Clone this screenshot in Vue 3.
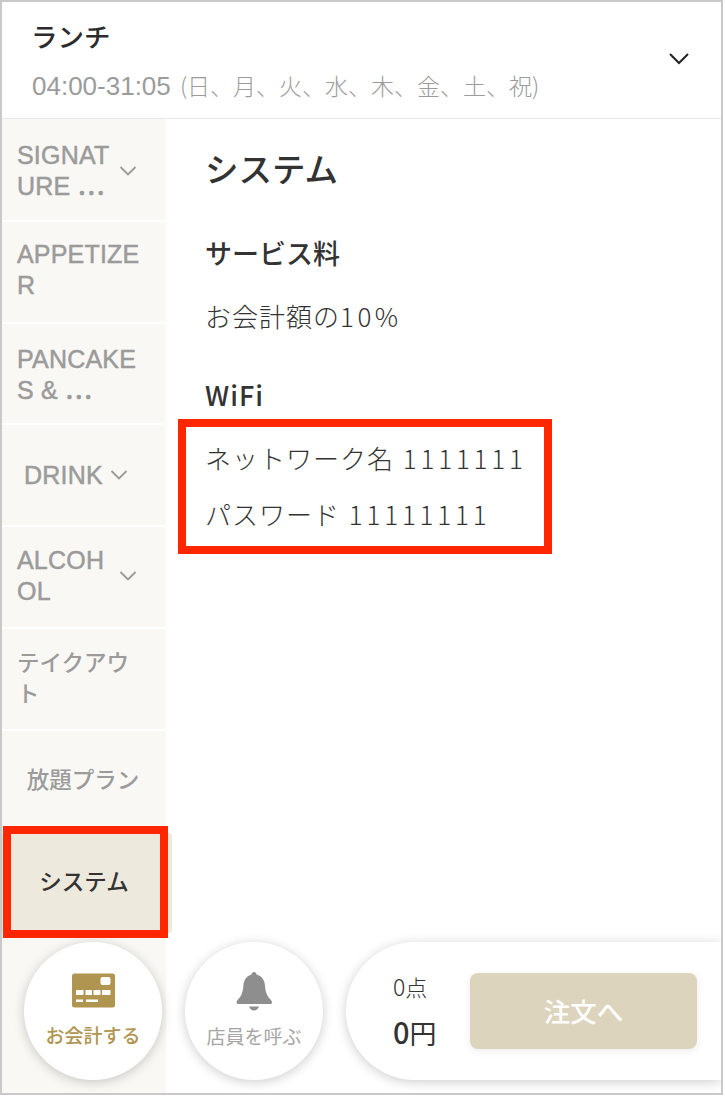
<script setup>
const cats = [
  { lines: ['SIGNAT', 'URE ⋯'], arrow: true, kind: 'low' },
  { lines: ['APPETIZE', 'R'], kind: 'high' },
  { lines: ['PANCAKE', 'S & ⋯'], kind: 'low' },
  { lines: ['DRINK'], arrow: true, kind: 'indent' },
  { lines: ['ALCOH', 'OL'], arrow: true, kind: 'high' },
  { lines: ['テイクアウ', 'ト'], kind: 'jp' },
  { lines: ['放題プラン'], kind: 'jp center' },
]
</script>

<template>
  <div class="page">
    <div class="frame">
      <header class="head">
        <div>
          <div class="plan">ランチ</div>
          <div class="hours"><span class="time">04:00-31:05</span> (日、月、火、水、木、金、土、祝)</div>
        </div>
        <svg class="head-arrow" width="22" height="14" viewBox="0 0 22 14"><path d="M2 2l9 9 9-9" fill="none" stroke="#222" stroke-width="2"/></svg>
      </header>
      <div class="body">
        <nav class="side">
          <div v-for="c in cats" :key="c.lines[0]" class="cat" :class="c.kind">
            <div class="cat-text"><div v-for="l in c.lines" :key="l">{{ l }}</div></div>
            <svg v-if="c.arrow" class="cat-arrow" width="18" height="12" viewBox="0 0 18 12"><path d="M1.500 2l7.500 7.500 7.500-7.500" fill="none" stroke="#9a9a96" stroke-width="1.800"/></svg>
          </div>
          <div class="cat jp active">システム</div>
        </nav>
        <main class="content">
          <h1>システム</h1>
          <h2 class="first">サービス料</h2>
          <p>お会計額の<span class="pct">10%</span></p>
          <h2 class="wifi">WiFi</h2>
          <p class="net">ネットワーク名 <span class="num">1111111</span></p>
          <p class="pass">パスワード <span class="num">11111111</span></p>
        </main>
      </div>

      <div class="dock">
        <button class="round pay">
          <svg width="43" height="35" viewBox="0 0 43 35">
            <rect width="43" height="34" y="0.500" rx="2.500" fill="#b09550"/>
            <rect x="28.500" y="4" width="10" height="8" rx="2" fill="#fff"/>
            <rect x="4" y="17" width="7.500" height="5" rx="0.500" fill="#fff"/>
            <rect x="13.500" y="17" width="6.500" height="5" rx="0.500" fill="#fff"/>
            <rect x="21.500" y="17" width="7" height="5" rx="0.500" fill="#fff"/>
            <rect x="30" y="17" width="8.500" height="5" rx="0.500" fill="#fff"/>
            <rect x="4" y="26.500" width="7" height="2.500" fill="#fff"/>
            <rect x="14" y="26.500" width="12" height="2.500" fill="#fff"/>
          </svg>
          <span>お会計する</span>
        </button>
        <button class="round call">
          <svg width="36" height="40" viewBox="0 0 36 40">
            <path d="M18 1c1.500 0 2.500 1 2.500 2.600 5.500 1.500 8 5.500 8.500 11 .4 5.500 1.500 10 5.500 14 1 1 1.500 2 1.500 3 0 .8-.6 1.400-1.500 1.400H2c-1 0-1.500-.6-1.500-1.400 0-1 .5-2 1.500-3 4-4 5-8.500 5.400-14 .5-5.500 3-9.500 8.100-11C15.500 2 16.500 1 18 1z" fill="#8e8e8e"/>
            <path d="M13 35.500h10c-.6 2.300-2.600 4-5 4s-4.400-1.700-5-4z" fill="#8e8e8e"/>
          </svg>
          <span>店員を呼ぶ</span>
        </button>
        <div class="cart">
          <div class="sum">
            <div class="count"><span class="zero">0</span>点</div>
            <div class="yen"><span class="zero-big">0</span>円</div>
          </div>
          <button class="order">注文へ</button>
        </div>
      </div>

      <div class="mark mark-side"></div>
      <div class="mark mark-wifi"></div>
    </div>
  </div>
</template>

<style>
html, body { margin: 0; background: #fff; }
</style>

<style scoped>
.page { width: 725px; height: 1097px; background: #fff; }
.frame {
  position: relative;
  box-sizing: border-box;
  width: 723px;
  height: 1095px;
  overflow: hidden;
  display: flex;
  flex-direction: column;
  border: 2px solid #c9c9c9;
  background: #fff;
  color: #333;
  font-family: "Liberation Sans", "Noto Sans CJK JP", sans-serif;
}
.head {
  box-sizing: border-box;
  height: 117px;
  flex: none;
  display: flex;
  align-items: center;
  justify-content: space-between;
  padding: 0 31px 0 30px;
  border-bottom: 1px solid #e8e8e8;
}
.plan {
  font-size: 26.500px;
  font-weight: 500;
  line-height: 36px;
  color: #2c2c2c;
  margin: 3px 0 0 -1px;
}
.hours {
  font-size: 23px;
  line-height: 36px;
  color: #9b9b9b;
  margin-top: 11px;
  font-family: "Noto Sans CJK JP", sans-serif;
  font-weight: 300;
}
.time { font-family: "Liberation Sans", sans-serif; font-size: 26px; margin-right: 4px; }
.head-arrow { margin-top: -2px; }
.body { flex: 1; display: flex; min-height: 0; }
.side {
  width: 164px;
  flex: none;
  display: flex;
  flex-direction: column;
  padding-top: 1px;
  background: #f9f8f4;
}
.cat {
  box-sizing: border-box;
  height: 101.800px;
  flex: none;
  display: flex;
  align-items: center;
  gap: 10px;
  padding: 0 0 0 15px;
  background: #f9f8f4;
  border-bottom: 2px solid #fff;
  color: #9b9b9b;
  font-size: 25px;
  letter-spacing: 0.200px;
  font-weight: 500;
  line-height: 31px;
  -webkit-text-stroke: 0.500px #9b9b9b;
}
.cat.low { padding-top: 3px; }
.cat.high { padding-bottom: 3px; }
.cat.jp { font-size: 22.500px; letter-spacing: 0; -webkit-text-stroke: 0; }
.cat.center { justify-content: center; padding-left: 0; padding-right: 2px; }
.cat.indent { padding-left: 22px; gap: 7px; }
.cat-text { white-space: nowrap; min-width: 92px; }
.cat.center .cat-text, .cat.indent .cat-text { min-width: 0; }
.cat.active {
  width: 170px;
  height: 100px;
  justify-content: center;
  padding: 0 6px 0 0;
  background: #eee9dd;
  border: none;
  border-radius: 0 3px 3px 0;
  color: #333;
}
.content { flex: 1; padding: 29px 0 0 39px; }
h1 {
  margin: 0 0 40px;
  font-size: 33.500px;
  line-height: 46px;
  font-weight: 500;
  color: #333;
}
h2 {
  margin: 0;
  font-size: 27px;
  line-height: 38px;
  font-weight: 500;
  color: #333;
  font-family: "Noto Sans CJK JP", sans-serif;
}
p {
  margin: 0;
  font-size: 26px;
  line-height: 38px;
  letter-spacing: 1px;
  font-weight: 300;
  color: #333;
  font-family: "Noto Sans CJK JP", sans-serif;
}
.first + p { margin-top: 25px; }
.wifi { margin-top: 41px; letter-spacing: 1px; }
.net { margin-top: 25px; }
.pass { margin-top: 18px; }
.num { letter-spacing: 3.800px; margin-left: 2px; }
.pct { letter-spacing: 3.500px; }
.dock {
  position: absolute;
  left: 22px;
  right: 0;
  top: 940px;
  height: 138px;
  display: flex;
  gap: 23px;
}
.round {
  width: 138px;
  height: 138px;
  flex: none;
  box-sizing: border-box;
  padding: 0;
  border: none;
  border-radius: 50%;
  background: #fff;
  box-shadow: 0 2px 12px rgba(0, 0, 0, .2);
  display: flex;
  flex-direction: column;
  align-items: center;
  font-family: inherit;
  font-size: 19px;
}
.round svg { margin-top: 31px; }
.pay span { margin-top: 13px; color: #b09550; font-weight: 500; }
.call svg { margin-top: 29px; }
.call span { margin-top: 11px; color: #a5a5a5; }
.cart {
  flex: 1;
  display: flex;
  align-items: center;
  gap: 32px;
  padding-left: 47px;
  border-radius: 69px 0 0 69px;
  background: #fff;
  box-shadow: 0 2px 12px rgba(0, 0, 0, .2);
}
.sum { width: 45px; flex: none; padding-bottom: 3px; font-family: "Noto Sans CJK JP", sans-serif; }
.count { font-size: 22px; line-height: 30px; font-weight: 300; color: #333; }
.zero { font-size: 23px; }
.yen { margin-top: 14px; font-size: 27px; line-height: 32px; color: #333; font-weight: 400; }
.zero-big { font-size: 29px; font-weight: 500; }
.order {
  width: 227px;
  height: 76px;
  margin-top: -1px;
  border: none;
  border-radius: 8px;
  background: #dcd4bc;
  box-shadow: 0 2px 8px rgba(0, 0, 0, .08);
  color: #fff;
  font-family: inherit;
  font-size: 26.500px;
  font-weight: 500;
}
.mark { position: absolute; box-sizing: border-box; border: 8px solid #ff2600; }
.mark-side { left: 1px; top: 824px; width: 165px; height: 112px; }
.mark-wifi { left: 176px; top: 417px; width: 374px; height: 135px; }
</style>
